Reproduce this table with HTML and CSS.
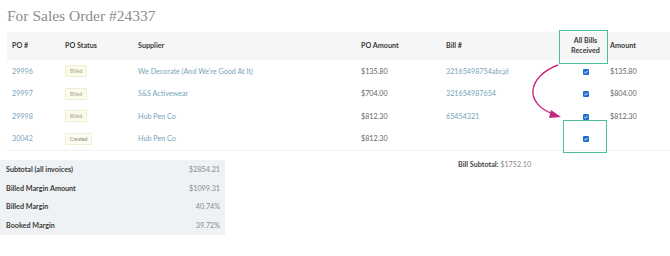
FILE: index.html
```html
<!DOCTYPE html>
<html>
<head>
<meta charset="utf-8">
<link rel="stylesheet" href="styles.css">
</head>
<body>
<div class="page">
  <h1 class="title">For Sales Order #24337</h1>
  <div class="table">
    <div class="row head">
      <div>PO #</div>
      <div>PO Status</div>
      <div>Supplier</div>
      <div>PO Amount</div>
      <div>Bill #</div>
      <div class="center">All Bills<br>Received</div>
      <div class="amt">Amount</div>
    </div>
    <div class="row">
      <div class="link">29996</div>
      <div><span class="badge">Billed</span></div>
      <div class="link">We Decorate (And We're Good At It)</div>
      <div>$135.80</div>
      <div class="link">32165498754abcjd</div>
      <div class="center"><span class="cb"><svg viewBox="0 0 6 6" width="6" height="6"><path d="M1.4 3.1 L2.5 4.1 L4.7 1.8" fill="none" stroke="#fff" stroke-width="0.9"/></svg></span></div>
      <div class="amt">$135.80</div>
    </div>
    <div class="row">
      <div class="link">29997</div>
      <div><span class="badge">Billed</span></div>
      <div class="link">S&amp;S Activewear</div>
      <div>$704.00</div>
      <div class="link">321654987654</div>
      <div class="center"><span class="cb"><svg viewBox="0 0 6 6" width="6" height="6"><path d="M1.4 3.1 L2.5 4.1 L4.7 1.8" fill="none" stroke="#fff" stroke-width="0.9"/></svg></span></div>
      <div class="amt">$804.00</div>
    </div>
    <div class="row">
      <div class="link">29998</div>
      <div><span class="badge">Billed</span></div>
      <div class="link">Hub Pen Co</div>
      <div>$812.30</div>
      <div class="link">65454321</div>
      <div class="center"><span class="cb"><svg viewBox="0 0 6 6" width="6" height="6"><path d="M1.4 3.1 L2.5 4.1 L4.7 1.8" fill="none" stroke="#fff" stroke-width="0.9"/></svg></span></div>
      <div class="amt">$812.30</div>
    </div>
    <div class="row last">
      <div class="link">30042</div>
      <div><span class="badge created">Created</span></div>
      <div class="link">Hub Pen Co</div>
      <div>$812.30</div>
      <div class="link"></div>
      <div class="center"><span class="cb"><svg viewBox="0 0 6 6" width="6" height="6"><path d="M1.4 3.1 L2.5 4.1 L4.7 1.8" fill="none" stroke="#fff" stroke-width="0.9"/></svg></span></div>
      <div class="amt"></div>
    </div>
  </div>
  <div class="bottom">
    <div class="summary">
      <div class="srow"><span class="slabel">Subtotal (all invoices)</span><span class="sval">$2854.21</span></div>
      <div class="srow"><span class="slabel">Billed Margin Amount</span><span class="sval">$1099.31</span></div>
      <div class="srow"><span class="slabel">Billed Margin</span><span class="sval">40.74%</span></div>
      <div class="srow"><span class="slabel">Booked Margin</span><span class="sval">39.72%</span></div>
    </div>
    <div class="bill-subtotal"><b>Bill Subtotal:</b> $1752.10</div>
  </div>

  <div class="hl hl-head"></div>
  <div class="hl hl-cell"></div>
  <svg class="arrow" width="670" height="256" viewBox="0 0 670 256">
    <path d="M558 65 C 528 76, 522 104, 556 115" fill="none" stroke="#c52a7c" stroke-width="1.4"/>
    <path d="M551 110 L561 117 L549 118 Z" fill="#c52a7c"/>
  </svg>
</div>
</body>
</html>
```

FILE: styles.css
```css
* { box-sizing: border-box; }
html, body { margin: 0; padding: 0; background: #fff; }
body {
  font-family: Lato, "Open Sans", sans-serif;
  font-size: 7.2px;
  color: #666;
  width: 670px;
  height: 256px;
  overflow: hidden;
}
.page { position: relative; width: 670px; height: 256px; }

.title {
  margin: 0;
  padding: 5px 0 0 7px;
  height: 32px;
  font-family: "Liberation Serif", serif;
  font-weight: normal;
  font-size: 15.5px;
  line-height: 22px;
  color: #8c8c8c;
}

.table {
  margin-left: 7px;
  border-bottom: 1px solid #f0f0f0;
}
.row {
  display: grid;
  grid-template-columns: 53px 73px 223px 85px 114px 48px 1fr;
  align-items: center;
  padding-left: 5px;
  height: 22.5px;
}
.row.head {
  height: 28px;
  background: #f6f6f6;
  font-weight: bold;
  color: #3a3a3a;
  line-height: 10px;
}
.center { text-align: center; padding-left: 3px; }
.amt { padding-left: 2px; }
.link { color: #76a4ba; }
.row > div { white-space: nowrap; }

.badge {
  display: inline-block;
  font-size: 5px;
  line-height: 10px;
  padding: 0 4px;
  background: #fbfbea;
  border: 1px solid #efedd6;
  border-radius: 1px;
  color: #a5a58a;
}
.badge.created { background: #fdfcf0; color: #8a8672; }

.cb {
  display: inline-flex;
  width: 6px;
  height: 6px;
  border-radius: 1px;
  background: #1e6fc9;
  vertical-align: middle;
}
.cb svg { display: block; }

.bottom {
  display: flex;
  align-items: flex-start;
  margin-top: 9px;
}
.summary {
  width: 225px;
  height: 75px;
  background: #eef2f4;
  padding: 1px 5px 0 6px;
}
.srow {
  display: flex;
  justify-content: space-between;
  height: 18.5px;
  line-height: 18.5px;
}
.slabel { font-weight: bold; color: #3a3a3a; }
.sval { color: #8a8a8a; }

.bill-subtotal {
  margin-left: 233px;
  line-height: 10px;
  color: #8a8a8a;
}
.bill-subtotal b { color: #444; }

.hl {
  position: absolute;
  border: 1.5px solid #4cc08e;
}
.hl-head { left: 559px; top: 30px; width: 49px; height: 34px; }
.hl-cell { left: 563px; top: 120px; width: 44px; height: 33px; }
.arrow { position: absolute; left: 0; top: 0; pointer-events: none; }
```
